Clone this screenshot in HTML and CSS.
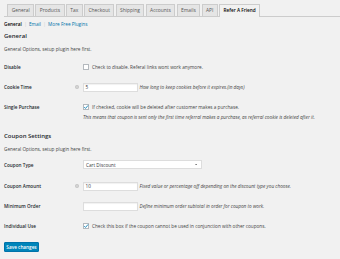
FILE: index.html
```html
<!DOCTYPE html>
<html>
<head>
<meta charset="utf-8">
<link rel="stylesheet" href="styles.css">
</head>
<body>
<div class="wrap">
  <nav class="tabs">
    <a class="tab">General</a>
    <a class="tab">Products</a>
    <a class="tab">Tax</a>
    <a class="tab">Checkout</a>
    <a class="tab">Shipping</a>
    <a class="tab">Accounts</a>
    <a class="tab">Emails</a>
    <a class="tab">API</a>
    <a class="tab active">Refer A Friend</a>
  </nav>
  <ul class="subnav">
    <li class="current">General</li>
    <li class="sep">|</li>
    <li><a class="link">Email</a></li>
    <li class="sep">|</li>
    <li><a class="link">More Free Plugins</a></li>
  </ul>

  <h2 class="title">General</h2>
  <p class="intro">General Options, setup plugin here first.</p>
  <div class="form first">
    <div class="row">
      <div class="label">Disable</div>
      <div class="field"><span class="cb"></span><span>Check to disable. Referal links wont work anymore.</span></div>
    </div>
    <div class="row">
      <div class="label">Cookie Time<span class="help"><svg viewBox="0 0 8 8" width="4" height="4"><circle cx="4" cy="4" r="4" fill="#c4c4c4"/><circle cx="4" cy="4" r="1.6" fill="#e4e4e4"/></svg></span></div>
      <div class="field"><span class="input">5</span><span class="desc">How long to keep cookies before it expires.(in days)</span></div>
    </div>
    <div class="row tall">
      <div class="label">Single Purchase</div>
      <div class="fieldcol">
        <div class="field"><span class="cb checked"><svg viewBox="0 0 10 10" width="6" height="6"><path d="M2 5.2 L4.2 7.4 L8.4 2.4" fill="none" stroke="#1e8cbe" stroke-width="1.6"/></svg></span><span>If checked, cookie will be deleted after customer makes a purchase.</span></div>
        <p class="desc note">This means that coupon is sent only the first time referral makes a purchase, as referral cookie is deleted after it.</p>
      </div>
    </div>
  </div>

  <h2 class="title second">Coupon Settings</h2>
  <p class="intro">General Options, setup plugin here first.</p>
  <div class="form coupons">
    <div class="row select-row">
      <div class="label">Coupon Type</div>
      <div class="field"><span class="select"><span>Cart Discount</span><svg viewBox="0 0 6 4" width="2.4" height="1.6"><path d="M0 0 L6 0 L3 4 Z" fill="#777"/></svg></span></div>
    </div>
    <div class="row">
      <div class="label">Coupon Amount<span class="help"><svg viewBox="0 0 8 8" width="4" height="4"><circle cx="4" cy="4" r="4" fill="#c4c4c4"/><circle cx="4" cy="4" r="1.6" fill="#e4e4e4"/></svg></span></div>
      <div class="field"><span class="input">10</span><span class="desc">Fixed value or percentage off depending on the discount type you choose.</span></div>
    </div>
    <div class="row">
      <div class="label">Minimum Order</div>
      <div class="field"><span class="input"></span><span class="desc">Define minimum order subtotal in order for coupon to work.</span></div>
    </div>
    <div class="row">
      <div class="label">Individual Use</div>
      <div class="field"><span class="cb checked"><svg viewBox="0 0 10 10" width="6" height="6"><path d="M2 5.2 L4.2 7.4 L8.4 2.4" fill="none" stroke="#1e8cbe" stroke-width="1.6"/></svg></span><span>Check this box if the coupon cannot be used in conjunction with other coupons.</span></div>
    </div>
  </div>
  <button class="save">Save changes</button>
</div>
</body>
</html>
```

FILE: styles.css
```css
html, body {
  margin: 0;
  background: #f1f1f1;
}
body {
  font-family: "Open Sans", "Liberation Sans", sans-serif;
  font-size: 4.7px;
  color: #444;
}
.wrap {
  padding: 4px 0 0 4px;
}
.tabs {
  display: flex;
  gap: 1.4px;
  padding-left: 3.3px;
  height: 12px;
  border-bottom: 1px solid #ccc;
}
.tab {
  box-sizing: border-box;
  height: 12px;
  padding: 0 3.4px;
  border: 1px solid #ccc;
  border-bottom: 0;
  background: #e5e5e5;
  color: #555;
  font-size: 4.9px;
  font-weight: 400;
  line-height: 11px;
  white-space: nowrap;
}
.tab.active {
  height: 13px;
  background: #f1f1f1;
  color: #000;
  font-weight: 600;
  font-size: 4.7px;
}
.subnav {
  list-style: none;
  margin: 4px 0 0;
  padding: 0;
  display: flex;
  gap: 2.3px;
  line-height: 6px;
  color: #666;
}
.subnav .current {
  color: #000;
  font-weight: 600;
}
.subnav .sep {
  color: #ccc;
}
.link {
  color: #0073aa;
}
.title {
  margin: 5px 0 0;
  font-size: 6px;
  line-height: 8px;
  font-weight: 600;
  color: #23282d;
}
.title.second {
  margin-top: 8px;
}
.intro {
  margin: 6px 0 0;
  line-height: 6px;
}
.form.first {
  margin-top: 5px;
}
.form.coupons {
  margin-top: 1px;
}
.row {
  display: grid;
  grid-template-columns: 79px 1fr;
  align-items: center;
  height: 20px;
  line-height: 6px;
}
.row.tall {
  height: auto;
  align-items: start;
  padding: 7px 0 4px;
}
.row.select-row {
  height: 23px;
}
.label {
  display: flex;
  justify-content: space-between;
  align-items: center;
  padding-right: 4px;
  font-weight: 600;
  color: #23282d;
}
.help {
  display: flex;
}
.field {
  display: flex;
  align-items: center;
  white-space: nowrap;
}
.cb {
  box-sizing: border-box;
  width: 6px;
  height: 6px;
  border: 1px solid #b4b9be;
  background: #fff;
  margin-right: 3px;
  display: flex;
  align-items: center;
  justify-content: center;
  flex: none;
}
.cb svg {
  flex: none;
}
.input {
  box-sizing: border-box;
  width: 55px;
  height: 9px;
  border: 1px solid #ddd;
  background: #fff;
  box-shadow: inset 0 1px 1px rgba(0,0,0,0.06);
  padding: 0 1.6px;
  line-height: 7px;
  color: #32373c;
  flex: none;
}
.desc {
  font-style: italic;
  margin-left: 1.5px;
}
.desc.note {
  margin: 4px 0 0;
  white-space: nowrap;
}
.select {
  box-sizing: border-box;
  width: 119px;
  height: 9px;
  border: 1px solid #ddd;
  background: #fff;
  display: flex;
  align-items: center;
  justify-content: space-between;
  padding: 0 4px 0 2px;
  color: #32373c;
}
.save {
  display: block;
  margin: 6px 0 0;
  box-sizing: border-box;
  height: 10px;
  width: 35px;
  padding: 0;
  border: 1px solid #0073aa;
  border-radius: 1px;
  background: #0085ba;
  color: #fff;
  font-family: "Open Sans", "Liberation Sans", sans-serif;
  font-size: 4.7px;
  font-weight: 600;
  line-height: 8px;
}
```
